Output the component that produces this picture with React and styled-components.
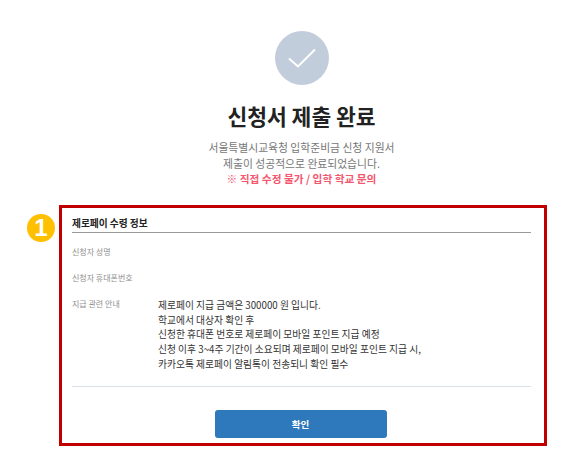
import styled, { createGlobalStyle } from "styled-components";

const GlobalStyle = createGlobalStyle`
  html, body {
    margin: 0;
    padding: 0;
    background: #ffffff;
  }
  * {
    box-sizing: border-box;
  }
  body {
    font-family: "Noto Sans CJK KR", "Noto Sans", sans-serif;
  }
`;

const App = () => {
  return (
    <>
      <GlobalStyle />
      <Page>
        <CheckCircle>
          <svg width="28" height="20" viewBox="0 0 28 20" fill="none">
            <path d="M1 10.5 L10 18.5 L27 1.5" stroke="#ffffff" strokeWidth="2" />
          </svg>
        </CheckCircle>
        <Title>신청서 제출 완료</Title>
        <Desc>서울특별시교육청 입학준비금 신청 지원서</Desc>
        <Desc>제출이 성공적으로 완료되었습니다.</Desc>
        <Warn>※ 직접 수정 불가 / 입학 학교 문의</Warn>
        <Panel>
          <NumberBadge>1</NumberBadge>
          <PanelTitle>제로페이 수령 정보</PanelTitle>
          <InfoRow>
            <Label>신청자 성명</Label>
          </InfoRow>
          <InfoRow>
            <Label>신청자 휴대폰번호</Label>
          </InfoRow>
          <NoticeRow>
            <Label>지급 관련 안내</Label>
            <Notice>
              <div>제로페이 지급 금액은 300000 원 입니다.</div>
              <div>학교에서 대상자 확인 후</div>
              <div>신청한 휴대폰 번호로 제로페이 모바일 포인트 지급 예정</div>
              <div>신청 이후 3~4주 기간이 소요되며 제로페이 모바일 포인트 지급 시,</div>
              <div>카카오톡 제로페이 알림톡이 전송되니 확인 필수</div>
            </Notice>
          </NoticeRow>
          <Divider />
          <ButtonRow>
            <ConfirmButton>확인</ConfirmButton>
          </ButtonRow>
        </Panel>
      </Page>
    </>
  );
};

const Page = styled.div`
  width: 588px;
  height: 470px;
  overflow: hidden;
  display: flex;
  flex-direction: column;
  align-items: center;
  padding: 31px 0 0 15px;
`;

const CheckCircle = styled.div`
  width: 54px;
  height: 54px;
  border-radius: 50%;
  background: #c2cddc;
  display: flex;
  justify-content: center;
  align-items: center;
`;

const Title = styled.h1`
  margin: 15px 0 7px;
  font-size: 21.5px;
  line-height: 32px;
  font-weight: 700;
  color: #222222;
`;

const Desc = styled.div`
  font-size: 10.8px;
  line-height: 16px;
  color: #777777;
`;

const Warn = styled.div`
  font-size: 10.7px;
  line-height: 16px;
  font-weight: 700;
  color: #f4566f;
`;

const Panel = styled.div`
  position: relative;
  width: 488px;
  height: 241px;
  margin-top: 18px;
  margin-left: 3px;
  border: 3px solid #c00000;
  padding: 6px 13px 0 10px;
`;

const NumberBadge = styled.div`
  position: absolute;
  left: -35px;
  top: 6px;
  width: 28px;
  height: 28px;
  border-radius: 50%;
  background: #ffc000;
  color: #ffffff;
  font-family: "Liberation Sans", sans-serif;
  font-size: 24px;
  font-weight: 700;
  display: flex;
  justify-content: center;
  align-items: center;
`;

const PanelTitle = styled.div`
  height: 19px;
  margin-bottom: 12px;
  padding-top: 1px;
  font-size: 9.7px;
  line-height: 16px;
  font-weight: 700;
  color: #222222;
  border-bottom: 1px solid #999999;
`;

const InfoRow = styled.div`
  height: 26px;
  display: flex;
`;

const NoticeRow = styled.div`
  display: flex;
  height: 73px;
`;

const Label = styled.div`
  width: 86px;
  flex-shrink: 0;
  font-size: 8px;
  line-height: 14px;
  color: #8f8f8f;
`;

const Notice = styled.div`
  padding-top: 1px;
  font-size: 9.75px;
  line-height: 14.7px;
  color: #333333;
`;

const Divider = styled.div`
  height: 1px;
  background: #d9dfe8;
  margin-top: 16px;
`;

const ButtonRow = styled.div`
  display: flex;
  justify-content: center;
  margin-top: 23px;
  padding-right: 2px;
`;

const ConfirmButton = styled.button`
  width: 172px;
  height: 28px;
  border: none;
  border-radius: 3px;
  background: #2e79bb;
  color: #ffffff;
  font-family: inherit;
  font-size: 9.5px;
  font-weight: 700;
`;

export default App;
